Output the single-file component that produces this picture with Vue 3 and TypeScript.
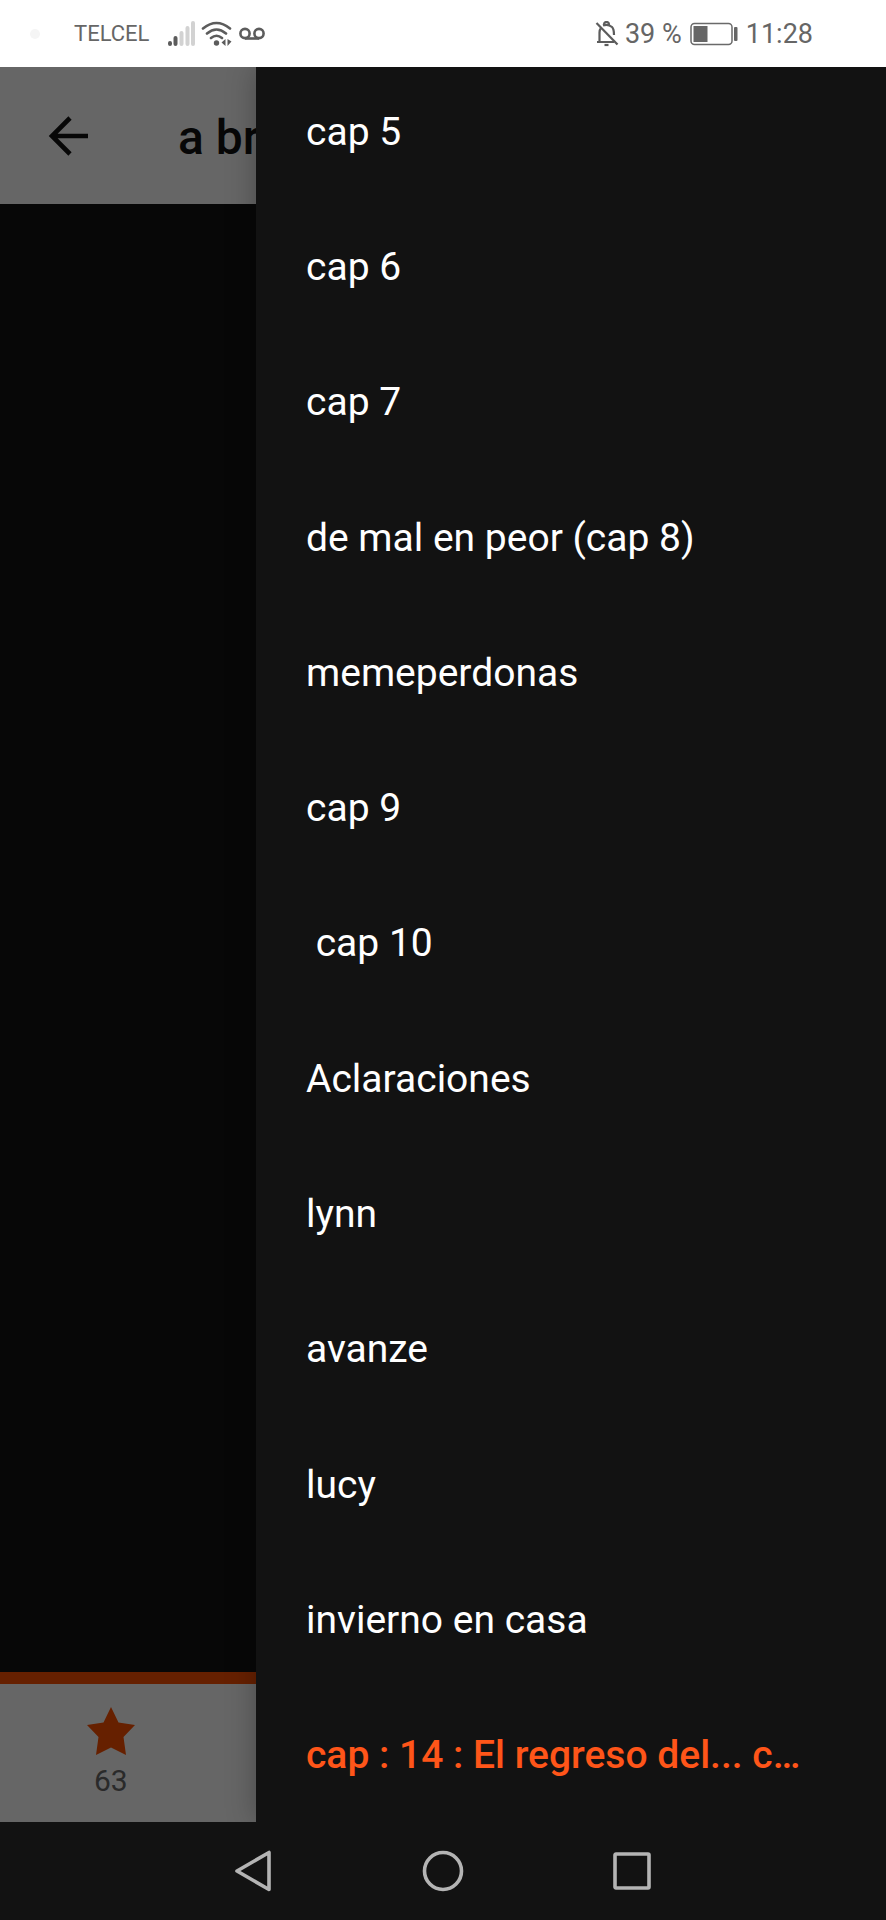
<script setup lang="ts">
import { ref } from 'vue'

interface Chapter {
  id: number
  title: string
}

const chapters: Chapter[] = [
  { id: 1, title: 'cap 5' },
  { id: 2, title: 'cap 6' },
  { id: 3, title: 'cap 7' },
  { id: 4, title: 'de mal en peor (cap 8)' },
  { id: 5, title: 'memeperdonas' },
  { id: 6, title: 'cap 9' },
  { id: 7, title: '\u00a0cap 10' },
  { id: 8, title: 'Aclaraciones' },
  { id: 9, title: 'lynn' },
  { id: 10, title: 'avanze' },
  { id: 11, title: 'lucy' },
  { id: 12, title: 'invierno en casa' },
  { id: 13, title: 'cap : 14 : El regreso del... c…' },
]

const current = ref(13)
const votes = ref(63)
</script>

<template>
  <div class="screen">
    <header class="status">
      <div class="status-side">
        <span class="dot"></span>
        <span class="carrier">TELCEL</span>
        <svg class="signal" width="28" height="26" viewBox="0 0 28 26" stroke-width="4" stroke-linecap="round" aria-hidden="true">
          <path d="M3 22v1M8.500 17v6" stroke="#5c5c5c" />
          <path d="M14.500 12v11M20.500 7v16M26 2v21" stroke="#d2d2d2" />
        </svg>
        <svg class="wifi" width="32" height="26" viewBox="0 0 32 26" fill="none" stroke="#5c5c5c" stroke-width="2.600" stroke-linecap="round" aria-hidden="true">
          <path d="M2 7.500Q15.500-3.500 29 7.500M6 12.500Q15.500 4.500 25 12.500M10 17Q15.500 12.500 21 17" />
          <circle cx="15.500" cy="22" r="2.700" fill="#5c5c5c" stroke="none" />
          <path d="M24.500 18v7l-4-3.500zM26.500 18v7l4-4.500z" fill="#5c5c5c" stroke="none" />
        </svg>
        <svg class="voicemail" width="26" height="14" viewBox="0 0 26 14" fill="none" stroke="#5c5c5c" stroke-width="2.600" aria-hidden="true">
          <circle cx="6" cy="6.500" r="4.600" />
          <circle cx="20" cy="6.500" r="4.600" />
          <path d="M6 11.500h14" />
        </svg>
      </div>
      <div class="status-side">
        <svg class="bell" width="24" height="26" viewBox="0 0 24 26" fill="none" stroke="#5c5c5c" stroke-width="2.200" aria-hidden="true">
          <path d="M1.500 2L22.500 23.500" />
          <path d="M2 21h17M4.500 21V11.500Q4.500 9 6 7M8 4.500Q13 2.500 17 6Q19 8 19 14" />
          <path d="M9 4Q9 1 11.500 1T14 4" />
          <path d="M9.500 24h4" />
        </svg>
        <span class="figure">39 %</span>
        <svg class="battery" width="48" height="24" viewBox="0 0 48 24" aria-hidden="true">
          <rect x="1" y="1.500" width="41" height="21" rx="3.500" fill="none" stroke="#6a6a6a" stroke-width="1.500" />
          <rect x="3.500" y="4" width="14" height="16" fill="#666" />
          <rect x="44" y="5" width="3.500" height="14" rx="1" fill="#666" />
        </svg>
        <span class="figure">11:28</span>
      </div>
    </header>

    <div class="app">
      <div class="reader">
        <div class="toolbar">
          <button class="back" type="button" aria-label="Atrás">
            <svg width="40" height="40" viewBox="0 0 40 40" fill="none" stroke="#121212" stroke-width="4.600" aria-hidden="true">
              <path d="M40 20H4M22 2L4 20L22 38" />
            </svg>
          </button>
          <h1 class="title">a br</h1>
        </div>
        <main class="page"></main>
        <div class="actions">
          <button class="vote" type="button">
            <svg width="48" height="48" viewBox="0 0 48 48" fill="#ff5000" aria-hidden="true">
              <path d="M24 0L31.500 15.500L48 18L36.500 30L39 48L24 40.500L9 48L11.500 30L0 18L16.500 15.500Z" />
            </svg>
            <span>{{ votes }}</span>
          </button>
        </div>
      </div>
      <div class="scrim"></div>
      <nav class="drawer">
        <ul class="chapters">
          <li v-for="chapter in chapters" :key="chapter.id">
            <button
              type="button"
              class="chapter"
              :class="{ active: chapter.id === current }"
              @click="current = chapter.id"
            >{{ chapter.title }}</button>
          </li>
        </ul>
      </nav>
    </div>

    <footer class="system">
      <button type="button" aria-label="Volver">
        <svg width="44" height="44" viewBox="0 0 44 44" aria-hidden="true">
          <path d="M37 3.500V40.500L5 22Z" />
        </svg>
      </button>
      <button type="button" aria-label="Inicio">
        <svg width="44" height="44" viewBox="0 0 44 44" aria-hidden="true">
          <circle cx="22" cy="22" r="18.500" />
        </svg>
      </button>
      <button type="button" aria-label="Recientes">
        <svg width="44" height="44" viewBox="0 0 44 44" aria-hidden="true">
          <rect x="5" y="5" width="34" height="34" rx="1" />
        </svg>
      </button>
    </footer>
  </div>
</template>

<style>
body {
  margin: 0;
  background: #121212;
}
</style>

<style scoped>
.screen {
  display: flex;
  flex-direction: column;
  min-height: 100vh;
  background: #121212;
  font-family: Roboto, "Liberation Sans", sans-serif;
}

button {
  margin: 0;
  padding: 0;
  border: 0;
  background: none;
  color: inherit;
  font: inherit;
  cursor: pointer;
}

svg {
  display: block;
  flex: none;
}

.status {
  display: flex;
  justify-content: space-between;
  height: 67px;
  padding: 0 73px 0 30px;
  background: #fff;
  color: #666;
}

.status-side {
  display: flex;
  align-items: center;
}

.dot {
  width: 10px;
  height: 10px;
  margin-right: 34px;
  border-radius: 50%;
  background: #f5f5f5;
}

.carrier {
  margin-right: 18px;
  font-size: 22px;
}

.wifi {
  margin: 0 6px;
}

.bell {
  margin-right: 6px;
}

.figure {
  font-size: 27px;
}

.battery {
  margin: 0 8px;
}

.app {
  position: relative;
  display: flex;
  flex: 1;
  overflow: hidden;
}

.reader {
  display: flex;
  flex: 1;
  flex-direction: column;
  min-width: 0;
}

.toolbar {
  display: flex;
  align-items: center;
  gap: 90px;
  height: 137px;
  padding-left: 48px;
  background: #fff;
}

.title {
  margin: 0;
  padding-top: 4px;
  color: #121212;
  font-size: 48px;
  font-weight: 500;
}

.page {
  flex: 1;
  background: #121212;
}

.actions {
  display: grid;
  grid-template-columns: repeat(4, 1fr);
  height: 138px;
  border-top: 12px solid #ff5000;
  background: #fff;
}

.vote {
  display: flex;
  flex-direction: column;
  align-items: center;
  justify-content: center;
  gap: 8px;
  color: #6a6a6a;
  font-size: 30px;
  line-height: 36px;
}

.scrim {
  position: absolute;
  inset: 0;
  background: rgba(0, 0, 0, 0.6);
}

.drawer {
  position: absolute;
  top: 0;
  right: 0;
  bottom: 0;
  width: 630px;
  max-width: 85%;
  background: #121212;
  box-shadow: 0 0 28px rgba(0, 0, 0, 0.28);
}

.chapters {
  display: grid;
  grid-auto-rows: 1fr;
  height: calc(100% + 4px);
  margin: -3px 0 0;
  padding: 0;
  list-style: none;
}

.chapter {
  width: 100%;
  height: 100%;
  padding: 0 50px;
  overflow: hidden;
  color: #fff;
  font-size: 39px;
  text-align: left;
  text-overflow: ellipsis;
  white-space: nowrap;
}

.chapter.active {
  color: #ff5519;
  font-weight: 500;
}

.system {
  display: grid;
  grid-template-columns: repeat(3, 1fr);
  height: 98px;
  padding: 0 18%;
}

.system button {
  display: flex;
  align-items: center;
  justify-content: center;
}

.system svg {
  fill: none;
  stroke: #b4b4b4;
  stroke-width: 3.600;
  stroke-linejoin: round;
}
</style>
